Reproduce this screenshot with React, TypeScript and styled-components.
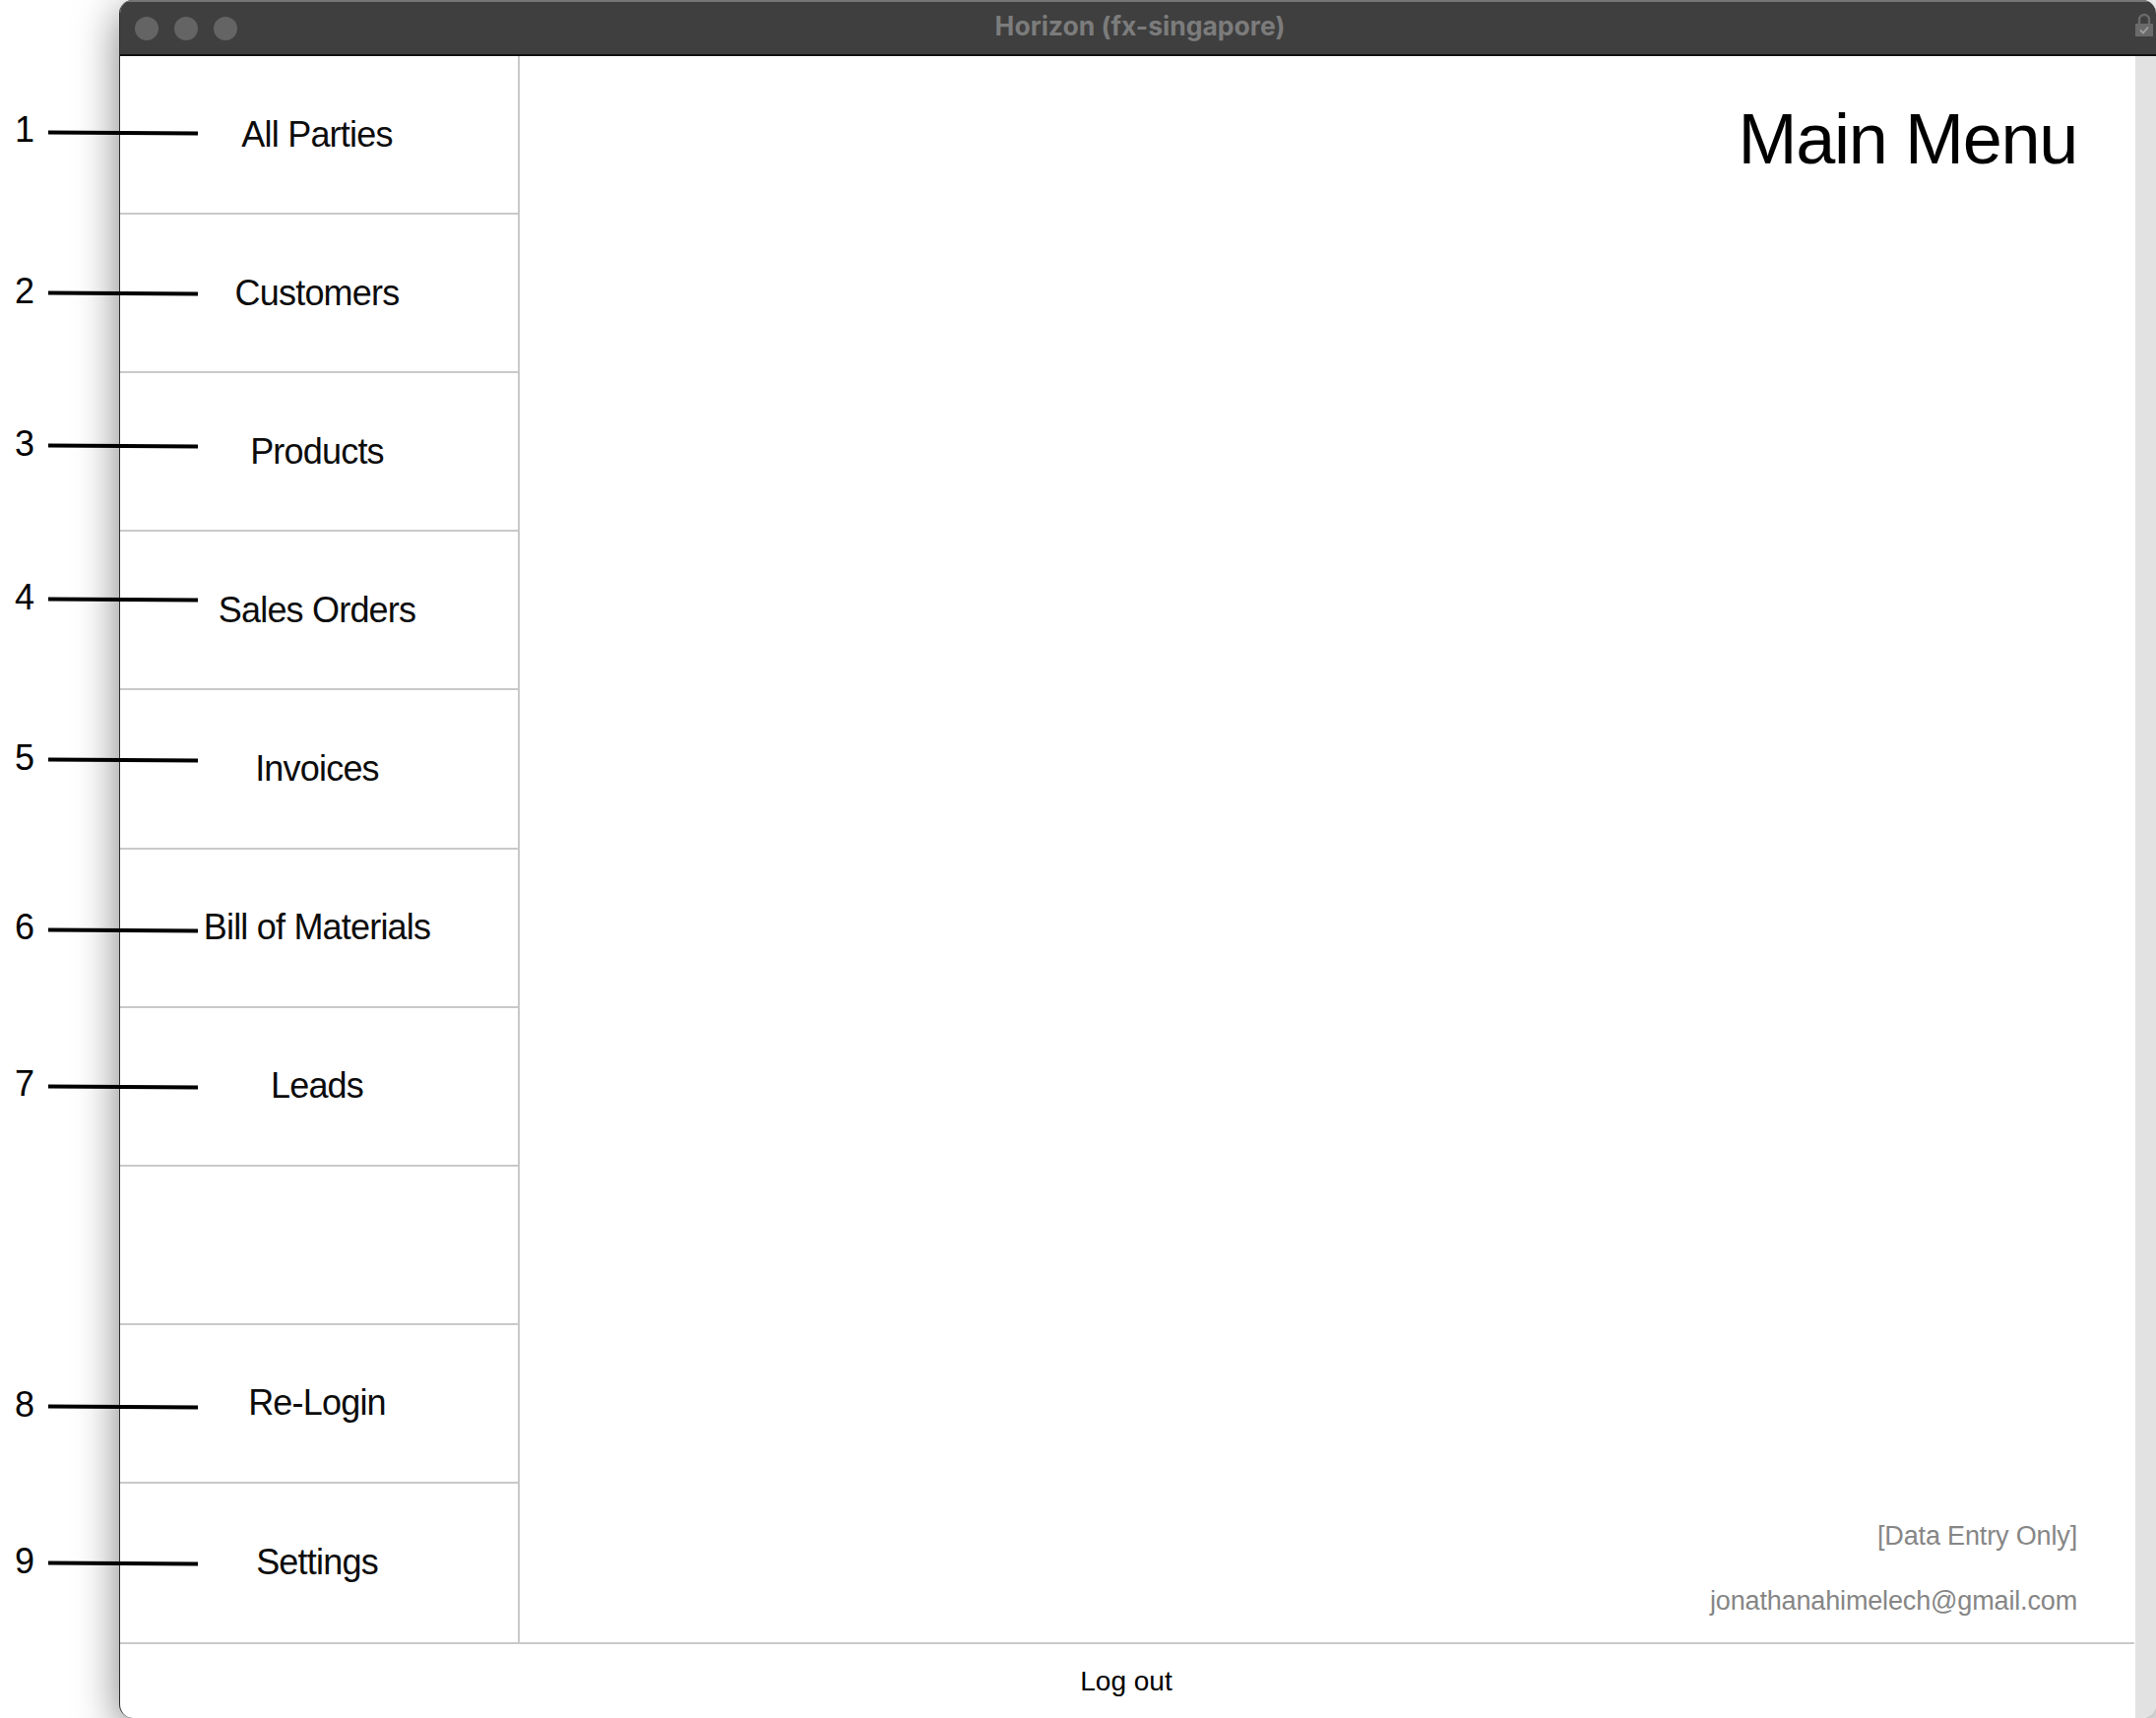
import React from "react";
import styled, { createGlobalStyle } from "styled-components";

const callouts = [
  { label: "1", labelY: 132, lineY: 134 },
  { label: "2", labelY: 296, lineY: 297 },
  { label: "3", labelY: 451, lineY: 452 },
  { label: "4", labelY: 607, lineY: 608 },
  { label: "5", labelY: 770, lineY: 771 },
  { label: "6", labelY: 942, lineY: 944 },
  { label: "7", labelY: 1101, lineY: 1103 },
  { label: "8", labelY: 1427, lineY: 1428 },
  { label: "9", labelY: 1586, lineY: 1587 },
];

const menuItems = [
  "All Parties",
  "Customers",
  "Products",
  "Sales Orders",
  "Invoices",
  "Bill of Materials",
  "Leads",
  "",
  "Re-Login",
  "Settings",
];

const GlobalStyle = createGlobalStyle`
  html, body {
    margin: 0;
    padding: 0;
    background: #ffffff;
  }
`;

const Page = styled.div`
  position: relative;
  width: 2190px;
  height: 1745px;
  padding-left: 121px;
  box-sizing: border-box;
  overflow: hidden;
  background: #ffffff;
  font-family: "Liberation Sans", Arial, sans-serif;
  font-weight: 400;
  color: #000000;
`;

const Window = styled.div`
  height: 100%;
  display: flex;
  flex-direction: column;
  box-sizing: border-box;
  border-left: 1px solid #2a2a2a;
  border-radius: 14px;
  background: #ffffff;
  box-shadow: 0 10px 44px rgba(0, 0, 0, 0.5);
  overflow: hidden;
`;

const TitleBar = styled.div`
  height: 57px;
  flex: none;
  display: grid;
  grid-template-columns: 1fr auto 1fr;
  align-items: center;
  box-sizing: border-box;
  padding: 0 3px 0 15px;
  background: #3f3f3f;
  border-top: 2px solid #767676;
  border-bottom: 2px solid #111111;
`;

const Lights = styled.div`
  display: flex;
  gap: 16px;
`;

const Light = styled.span`
  width: 24px;
  height: 24px;
  border-radius: 50%;
  background: #646464;
`;

const WindowTitle = styled.div`
  padding-right: 8px;
  margin-top: -5px;
  font-family: "Inter", "Liberation Sans", sans-serif;
  font-size: 26.5px;
  font-weight: 700;
  color: #7c7c7c;
`;

const LockIcon = styled.svg`
  justify-self: end;
  width: 18px;
  height: 24px;
  margin-top: -8px;
`;

const Workspace = styled.div`
  flex: 1;
  min-height: 0;
  display: flex;
`;

const Stage = styled.div`
  flex: 1;
  min-width: 0;
  display: flex;
  flex-direction: column;
  margin-right: 1px;
`;

const ScrollStrip = styled.div`
  width: 21px;
  flex: none;
  background: #e2e2e2;
`;

const Panels = styled.div`
  height: 1611px;
  flex: none;
  display: flex;
  border-bottom: 2px solid #c9c9c9;
`;

const Sidebar = styled.nav`
  width: 404px;
  flex: none;
  display: grid;
  grid-template-rows: repeat(10, 1fr);
  border-right: 2px solid #c9c9c9;
`;

const MenuRow = styled.div`
  display: flex;
  align-items: center;
  justify-content: center;
  padding-right: 4px;
  font-size: 36px;
  letter-spacing: -0.8px;
  color: #0c0c0c;
  border-bottom: 2px solid #c9c9c9;

  &:last-child {
    border-bottom: none;
  }
`;

const Main = styled.main`
  flex: 1;
  display: flex;
  flex-direction: column;
  align-items: flex-end;
  padding: 42px 58px 25px 0;
`;

const Heading = styled.h1`
  margin: 0;
  font-size: 72px;
  font-weight: 400;
  line-height: 84px;
  letter-spacing: -1.3px;
`;

const UserInfo = styled.div`
  margin-top: auto;
  display: flex;
  flex-direction: column;
  align-items: flex-end;
  gap: 33px;
  font-size: 27px;
  line-height: 33px;
  letter-spacing: -0.15px;
  color: #868686;
`;

const LogOut = styled.div`
  flex: 1;
  display: flex;
  align-items: center;
  justify-content: center;
  padding-right: 2px;
  font-size: 28px;
`;

const CalloutNumber = styled.span<{ $y: number }>`
  position: absolute;
  left: 0;
  top: ${(p) => p.$y}px;
  width: 50px;
  text-align: center;
  font-size: 36px;
  line-height: 36px;
  transform: translateY(-18px);
`;

const CalloutLine = styled.span<{ $y: number }>`
  position: absolute;
  left: 49px;
  top: ${(p) => p.$y - 1}px;
  width: 152px;
  height: 3.5px;
  background: #000000;
  transform: rotate(0.4deg);
`;

export default function App() {
  return (
    <Page>
      <GlobalStyle />
      <Window>
        <TitleBar>
          <Lights>
            <Light />
            <Light />
            <Light />
          </Lights>
          <WindowTitle>Horizon (fx-singapore)</WindowTitle>
          <LockIcon viewBox="0 0 18 24">
            <path d="M4 11V7a5 5 0 0 1 10 0v4" fill="none" stroke="#6a6a6a" strokeWidth="2.4" />
            <rect x="0" y="11" width="18" height="13" fill="#6a6a6a" />
            <path d="M5 17.5l3 3 5-6" fill="none" stroke="#a0a0a0" strokeWidth="1.8" />
          </LockIcon>
        </TitleBar>
        <Workspace>
          <Stage>
            <Panels>
              <Sidebar>
                {menuItems.map((item, i) => (
                  <MenuRow key={i}>{item}</MenuRow>
                ))}
              </Sidebar>
              <Main>
                <Heading>Main Menu</Heading>
                <UserInfo>
                  <span>[Data Entry Only]</span>
                  <span>jonathanahimelech@gmail.com</span>
                </UserInfo>
              </Main>
            </Panels>
            <LogOut>Log out</LogOut>
          </Stage>
          <ScrollStrip />
        </Workspace>
      </Window>
      {callouts.map((c) => (
        <React.Fragment key={c.label}>
          <CalloutNumber $y={c.labelY}>{c.label}</CalloutNumber>
          <CalloutLine $y={c.lineY} />
        </React.Fragment>
      ))}
    </Page>
  );
}
